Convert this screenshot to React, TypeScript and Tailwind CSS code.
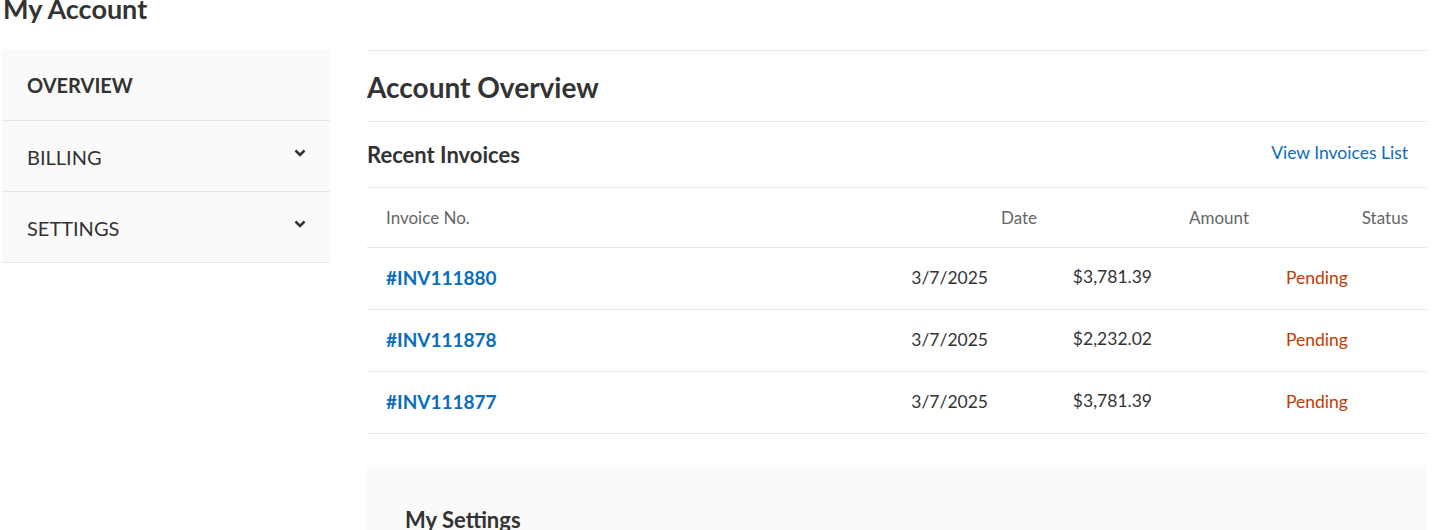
export default function App() {
  const rows = ["#INV111880", "#INV111878", "#INV111877"];
  const amts = ["$3,781.39", "$2,232.02", "$3,781.39"];
  return (
    <div className="relative h-[530px] w-[1451px] overflow-hidden bg-white text-[#333]" style={{ fontFamily: "Lato, 'Open Sans', sans-serif" }}>
      <h1 className="absolute left-[3px] top-[-9px] text-[27px] font-bold leading-[36px] text-[#333]">My Account</h1>
      <div className="flex items-start pt-[50px]">
        <div className="ml-[2px] w-[328px] bg-[#fafafa]">
          <div className="flex h-[71px] items-center border-b border-[#e6e6e6] px-[25px] text-[20px] font-bold">OVERVIEW</div>
          {["BILLING", "SETTINGS"].map((t) => (
            <div key={t} className="flex h-[71px] items-center justify-between border-b border-[#e6e6e6] px-[25px] pt-[2px] text-[20px]">
              <span>{t}</span>
              <svg width="14" height="14" viewBox="0 0 14 14" className="mb-[8px] mr-[-2px]"><path d="M2.5 4.5 7 9l4.5-4.5" fill="none" stroke="#333" strokeWidth="2.6" /></svg>
            </div>
          ))}
        </div>
        <div className="ml-[37px] w-[1060px]">
          <div className="flex h-[72px] items-center border-t border-b border-[#e6e6e6] pt-[2px] text-[28px] font-bold">Account Overview</div>
          <div className="flex h-[66px] items-center justify-between border-b border-[#e6e6e6] pr-[19px]">
            <span className="text-[22px] font-bold">Recent Invoices</span>
            <span className="mb-[2px] text-[17.5px] text-[#0a6ebd]">View Invoices List</span>
          </div>
          <div className="flex h-[60px] items-center border-b border-[#e6e6e6] px-[19px] text-[17px] text-[#666]">
            <span className="flex-1">Invoice No.</span>
            <span className="w-[137px] text-right">Date</span>
            <span className="w-[212px] text-right">Amount</span>
            <span className="w-[159px] text-right">Status</span>
          </div>
          {rows.map((r, i) => (
            <div key={r} className="flex h-[62px] items-center border-b border-[#e6e6e6] px-[19px] text-[17.5px]">
              <span className="flex-1 font-bold text-[#0a6ebd] text-[19px]">{r}</span>
              <span className="w-[88px] text-right">3/7/2025</span>
              <span className="w-[164px] text-right mb-[2px]">{amts[i]}</span>
              <span className="ml-[134px] w-[122px] text-[#c23b00]">Pending</span>
            </div>
          ))}
          <div className="mt-[31px] h-[100px] bg-[#fafafa] px-[38px] pt-[38px] text-[22px] font-bold">My Settings</div>
        </div>
      </div>
    </div>
  );
}
